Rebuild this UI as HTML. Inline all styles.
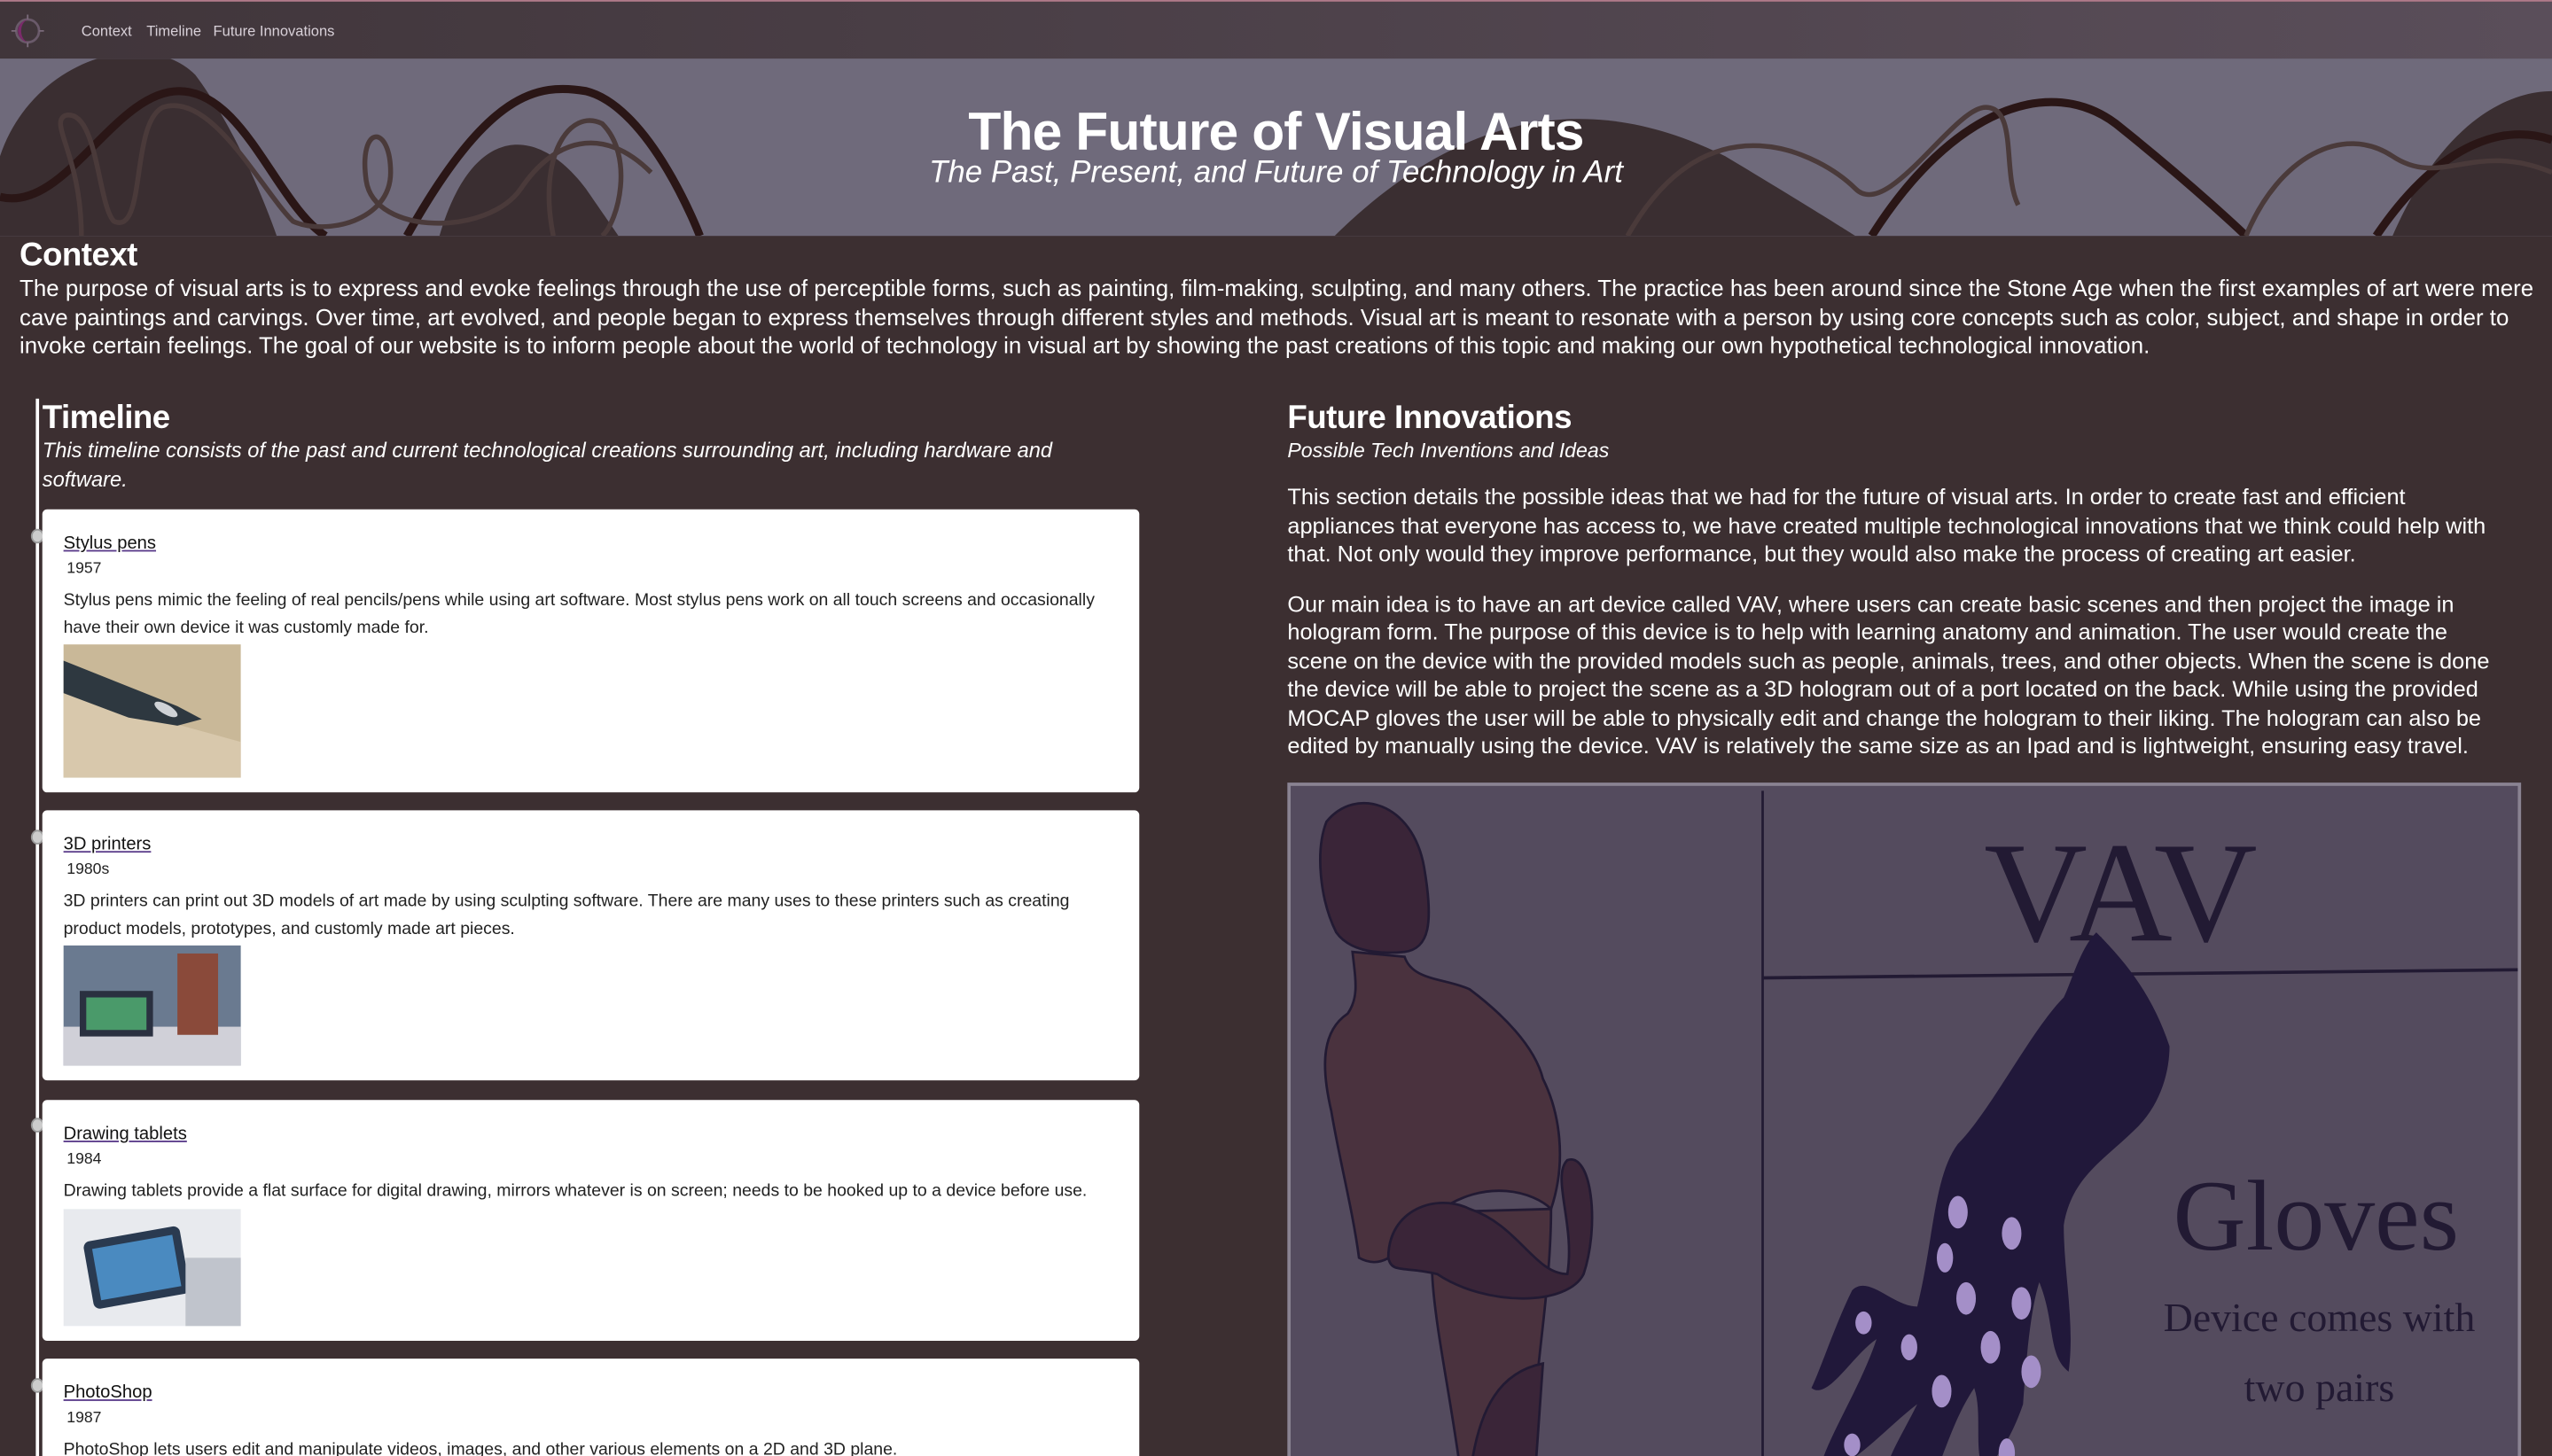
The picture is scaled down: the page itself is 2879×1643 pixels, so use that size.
<!DOCTYPE html>
<html><head><meta charset="utf-8">
<style>
html,body{margin:0;padding:0;width:2879px;height:1643px;overflow:hidden;background:#3c2f31}
#w{position:absolute;left:0;top:0;width:1568px;height:895px;overflow:hidden;transform:scale(1.8361);transform-origin:0 0;font-family:"Liberation Sans",sans-serif;color:#fff}
.nav{position:absolute;left:0;top:0;width:1568px;height:36px;background:linear-gradient(90deg,#40353a,#5a4e5a);border-top:1px solid #b07a8a;box-sizing:border-box}
.nav a{position:absolute;top:13px;font-size:9px;color:#d8d0d8;text-decoration:none}
.hero{position:absolute;left:0;top:36px;width:1568px;height:109px;background:#6f6a7b;overflow:hidden}
.hero h1{position:absolute;left:0;width:1568px;top:26px;margin:0;text-align:center;font-size:33px;font-weight:bold;letter-spacing:-0.5px}
.hero .sub{position:absolute;left:0;width:1568px;top:60px;text-align:center;font-size:19px;font-style:italic}
h2{margin:0;font-size:20px;font-weight:bold;letter-spacing:-0.3px}
.ctx{position:absolute;left:12px;top:146px;width:1550px}
.ctx p{margin:0;font-size:14.1px;line-height:17.5px}
.tl{position:absolute;left:22px;top:245px;width:680px;height:660px;border-left:2px solid #fff}
.tl h2{position:absolute;left:2px;top:1px}
.tl .it{position:absolute;left:2px;top:23px;width:650px;font-size:12.9px;line-height:17.5px;font-style:italic}
.card{position:absolute;left:2px;width:674px;background:#fff;border-radius:3px;color:#222;box-sizing:border-box;padding:11px 13px}
.card a{color:#111;font-size:11px;text-decoration:underline;text-decoration-color:#5a3b8a}
.card .yr{font-size:9.6px;margin:2px 0 0 2px}
.card p{margin:6px 0 2px;font-size:10.6px;line-height:16.5px}
.dot{position:absolute;left:-5px;width:6px;height:7px;border-radius:50%;background:#ccc;border:1px solid #999}
.img{width:109px;display:block}
.fi{position:absolute;left:791px;top:245px;width:750px}
.fi h2{margin-top:1px}
.fi .it{font-size:12.6px;font-style:italic;margin-top:1px}
.fi p{font-size:13.8px;line-height:17.5px;margin:13px 0 0}
.frame{position:absolute;left:791px;top:481px;width:758px;height:430px;border:2px solid #8a8392;background:#544b5e;box-sizing:border-box}
</style></head><body><div id="w">
<div class="nav">
<svg style="position:absolute;left:6px;top:7px" width="22" height="22" viewBox="0 0 22 22"><circle cx="11" cy="11" r="7" fill="none" stroke="#6a5a6a" stroke-width="1.5"/><path d="M12 4 A7 7 0 0 0 12 18 A5 7 0 0 1 12 4Z" fill="#7a2a6a"/><g stroke="#7a6a7a" stroke-width="1"><line x1="11" y1="1" x2="11" y2="4"/><line x1="11" y1="18" x2="11" y2="21"/><line x1="1" y1="11" x2="4" y2="11"/><line x1="18" y1="11" x2="21" y2="11"/></g></svg>
<a style="left:50px">Context</a><a style="left:90px">Timeline</a><a style="left:131px">Future Innovations</a>
</div>
<div class="hero">
<svg width="1568" height="109" style="position:absolute;left:0;top:0">
<path d="M0 60 C20 0,90 -20,120 10 C150 50,170 109,170 109 L0 109Z" fill="#3a2e31"/>
<path d="M270 109 C290 40,330 40,360 80 C380 109,380 109,380 109Z" fill="#3a2e31"/>
<path d="M820 109 C900 30,980 20,1060 60 C1110 90,1140 109,1140 109Z" fill="#3a2e31"/>
<path d="M1470 109 C1500 40,1540 20,1568 20 L1568 109Z" fill="#3a2e31"/>
<path d="M0 85 C40 95,70 20,110 20 C150 20,170 90,200 109 M250 109 C300 20,330 15,360 20 C400 30,430 109,430 109" fill="none" stroke="#2a1616" stroke-width="5"/>
<path d="M1150 109 C1200 30,1260 10,1300 40 C1350 80,1380 109,1380 109 M1460 109 C1500 50,1540 40,1568 50" fill="none" stroke="#2a1616" stroke-width="5"/>
<path d="M50 109 C50 60,30 40,40 35 C60 30,60 90,70 100 C90 109,80 40,100 30 C130 20,160 80,180 100 C200 109,240 100,240 70 C240 40,220 40,225 75 C230 109,300 109,320 80 C340 50,370 40,400 70 M1000 109 C1050 20,1120 60,1140 80 C1160 100,1200 30,1220 30 C1240 30,1230 70,1240 90" fill="none" stroke="#4a3a3a" stroke-width="3"/>
<path d="M340 109 C330 60,350 30,370 40 C390 60,380 100,370 109 M1380 109 C1400 60,1440 40,1470 60 C1500 80,1520 50,1568 70" fill="none" stroke="#4a3a3a" stroke-width="3"/>
</svg>
<h1>The Future of Visual Arts</h1>
<div class="sub">The Past, Present, and Future of Technology in Art</div>
</div>
<div class="ctx"><h2>Context</h2>
<p>The purpose of visual arts is to express and evoke feelings through the use of perceptible forms, such as painting, film-making, sculpting, and many others. The practice has been around since the Stone Age when the first examples of art were mere cave paintings and carvings. Over time, art evolved, and people began to express themselves through different styles and methods. Visual art is meant to resonate with a person by using core concepts such as color, subject, and shape in order to invoke certain feelings. The goal of our website is to inform people about the world of technology in visual art by showing the past creations of this topic and making our own hypothetical technological innovation.</p></div>
<div class="tl">
<h2>Timeline</h2>
<div class="it">This timeline consists of the past and current technological creations surrounding art, including hardware and software.</div>
<div class="dot" style="top:80px"></div>
<div class="card" style="top:68px;height:174px"><a>Stylus pens</a><div class="yr">1957</div><p>Stylus pens mimic the feeling of real pencils/pens while using art software. Most stylus pens work on all touch screens and occasionally have their own device it was customly made for.</p>
<svg class="img" height="82" viewBox="0 0 109 82"><rect width="109" height="82" fill="#c9b898"/><path d="M0 30 L109 60 L109 82 L0 82Z" fill="#d8c8ac"/><path d="M0 10 L50 30 L70 38 L85 46 L70 50 L40 45 L0 30Z" fill="#2e3840"/><ellipse cx="63" cy="40" rx="3" ry="8" fill="#cfd2d6" transform="rotate(-60 63 40)"/></svg></div>
<div class="dot" style="top:265px"></div>
<div class="card" style="top:253px;height:166px"><a>3D printers</a><div class="yr">1980s</div><p>3D printers can print out 3D models of art made by using sculpting software. There are many uses to these printers such as creating product models, prototypes, and customly made art pieces.</p>
<svg class="img" height="74" viewBox="0 0 109 74"><rect width="109" height="74" fill="#6a7a90"/><rect y="50" width="109" height="24" fill="#d0d0d8"/><rect x="10" y="28" width="45" height="28" fill="#2a3040"/><rect x="14" y="32" width="37" height="20" fill="#4a9a6a"/><rect x="70" y="5" width="25" height="50" fill="#8a4a3a"/></svg></div>
<div class="dot" style="top:442px"></div>
<div class="card" style="top:431px;height:148px"><a>Drawing tablets</a><div class="yr">1984</div><p>Drawing tablets provide a flat surface for digital drawing, mirrors whatever is on screen; needs to be hooked up to a device before use.</p>
<svg class="img" height="72" viewBox="0 0 109 72"><rect width="109" height="72" fill="#e8eaee"/><rect x="15" y="15" width="60" height="42" rx="4" fill="#2a3a50" transform="rotate(-10 45 36)"/><rect x="20" y="20" width="50" height="32" fill="#4a8ac0" transform="rotate(-10 45 36)"/><rect x="75" y="30" width="34" height="42" fill="#c0c4cc"/></svg></div>
<div class="dot" style="top:602px"></div>
<div class="card" style="top:590px;height:100px"><a>PhotoShop</a><div class="yr">1987</div><p>PhotoShop lets users edit and manipulate videos, images, and other various elements on a 2D and 3D plane.</p></div>
</div>
<div class="fi"><h2>Future Innovations</h2>
<div class="it">Possible Tech Inventions and Ideas</div>
<p>This section details the possible ideas that we had for the future of visual arts. In order to create fast and efficient appliances that everyone has access to, we have created multiple technological innovations that we think could help with that. Not only would they improve performance, but they would also make the process of creating art easier.</p>
<p>Our main idea is to have an art device called VAV, where users can create basic scenes and then project the image in hologram form. The purpose of this device is to help with learning anatomy and animation. The user would create the scene on the device with the provided models such as people, animals, trees, and other objects. When the scene is done the device will be able to project the scene as a 3D hologram out of a port located on the back. While using the provided MOCAP gloves the user will be able to physically edit and change the hologram to their liking. The hologram can also be edited by manually using the device. VAV is relatively the same size as an Ipad and is lightweight, ensuring easy travel.</p>
</div>
<div class="frame">
<svg width="754" height="426" viewBox="0 0 754 426" style="position:absolute;left:0;top:0">
<line x1="290" y1="3" x2="290" y2="426" stroke="#221a33" stroke-width="1.5"/>
<line x1="290" y1="118" x2="754" y2="113" stroke="#221a33" stroke-width="2"/>
<path d="M22 22 C40 0,75 10,82 50 C88 85,85 100,70 102 C50 104,35 100,28 90 C18 70,15 40,22 22Z" fill="#3a2538" stroke="#221a33" stroke-width="1.5"/>
<path d="M38 102 C40 120,42 130,35 140 C20 150,18 170,25 200 C30 230,38 260,42 290 C60 300,70 280,90 262 C120 240,150 250,160 260 C170 230,165 200,155 180 C150 160,130 140,110 125 C95 118,75 120,70 105Z" fill="#4a323e" stroke="#221a33" stroke-width="1.5"/>
<path d="M90 262 C80 300,95 350,105 426 L150 426 C145 380,160 320,160 260Z" fill="#4a323e" stroke="#221a33" stroke-width="1.5"/>
<path d="M60 290 C60 260,90 250,110 260 C140 270,150 300,170 300 C175 270,160 240,170 230 C185 225,190 270,180 300 C170 320,120 320,90 300 C70 295,62 300,60 290Z" fill="#3a2538" stroke="#221a33" stroke-width="1.5"/>
<path d="M110 426 C115 380,130 360,155 355 L150 426Z" fill="#3a2538" stroke="#221a33" stroke-width="1.5"/>
<text x="510" y="95" font-family="Liberation Serif,serif" font-size="88" fill="#221a33" text-anchor="middle">VAV</text>
<text x="630" y="285" font-family="Liberation Serif,serif" font-size="62" fill="#221a33" text-anchor="middle">Gloves</text>
<text x="632" y="335" font-family="Liberation Serif,serif" font-size="25" fill="#221a33" text-anchor="middle">Device comes with</text>
<text x="632" y="378" font-family="Liberation Serif,serif" font-size="25" fill="#221a33" text-anchor="middle">two pairs</text>
<path d="M475 130 C455 150,430 200,410 220 C395 240,395 280,385 320 C370 320,355 300,345 310 C335 330,325 360,320 370 C330 378,345 350,360 340 C350 370,330 400,325 420 C340 425,365 395,385 380 C375 400,365 415,365 426 L395 426 C405 400,410 385,420 370 C425 385,420 405,425 420 C435 415,445 395,450 380 C452 350,455 320,460 305 C470 330,465 350,478 360 C482 330,475 300,475 270 C480 240,500 230,520 210 C535 195,540 175,540 160 C530 130,515 110,495 90 C485 100,480 120,475 130Z" fill="#21183a"/>
<g fill="#a48fc8"><ellipse cx="410" cy="262" rx="6" ry="10"/><ellipse cx="443" cy="275" rx="6" ry="10"/><ellipse cx="402" cy="290" rx="5" ry="9"/><ellipse cx="415" cy="315" rx="6" ry="10"/><ellipse cx="449" cy="318" rx="6" ry="10"/><ellipse cx="430" cy="345" rx="6" ry="10"/><ellipse cx="455" cy="360" rx="6" ry="10"/><ellipse cx="400" cy="372" rx="6" ry="10"/><ellipse cx="380" cy="345" rx="5" ry="8"/><ellipse cx="352" cy="330" rx="5" ry="7"/><ellipse cx="440" cy="410" rx="5" ry="9"/><ellipse cx="345" cy="405" rx="5" ry="7"/></g>
</svg>
</div>
</div></body></html>
